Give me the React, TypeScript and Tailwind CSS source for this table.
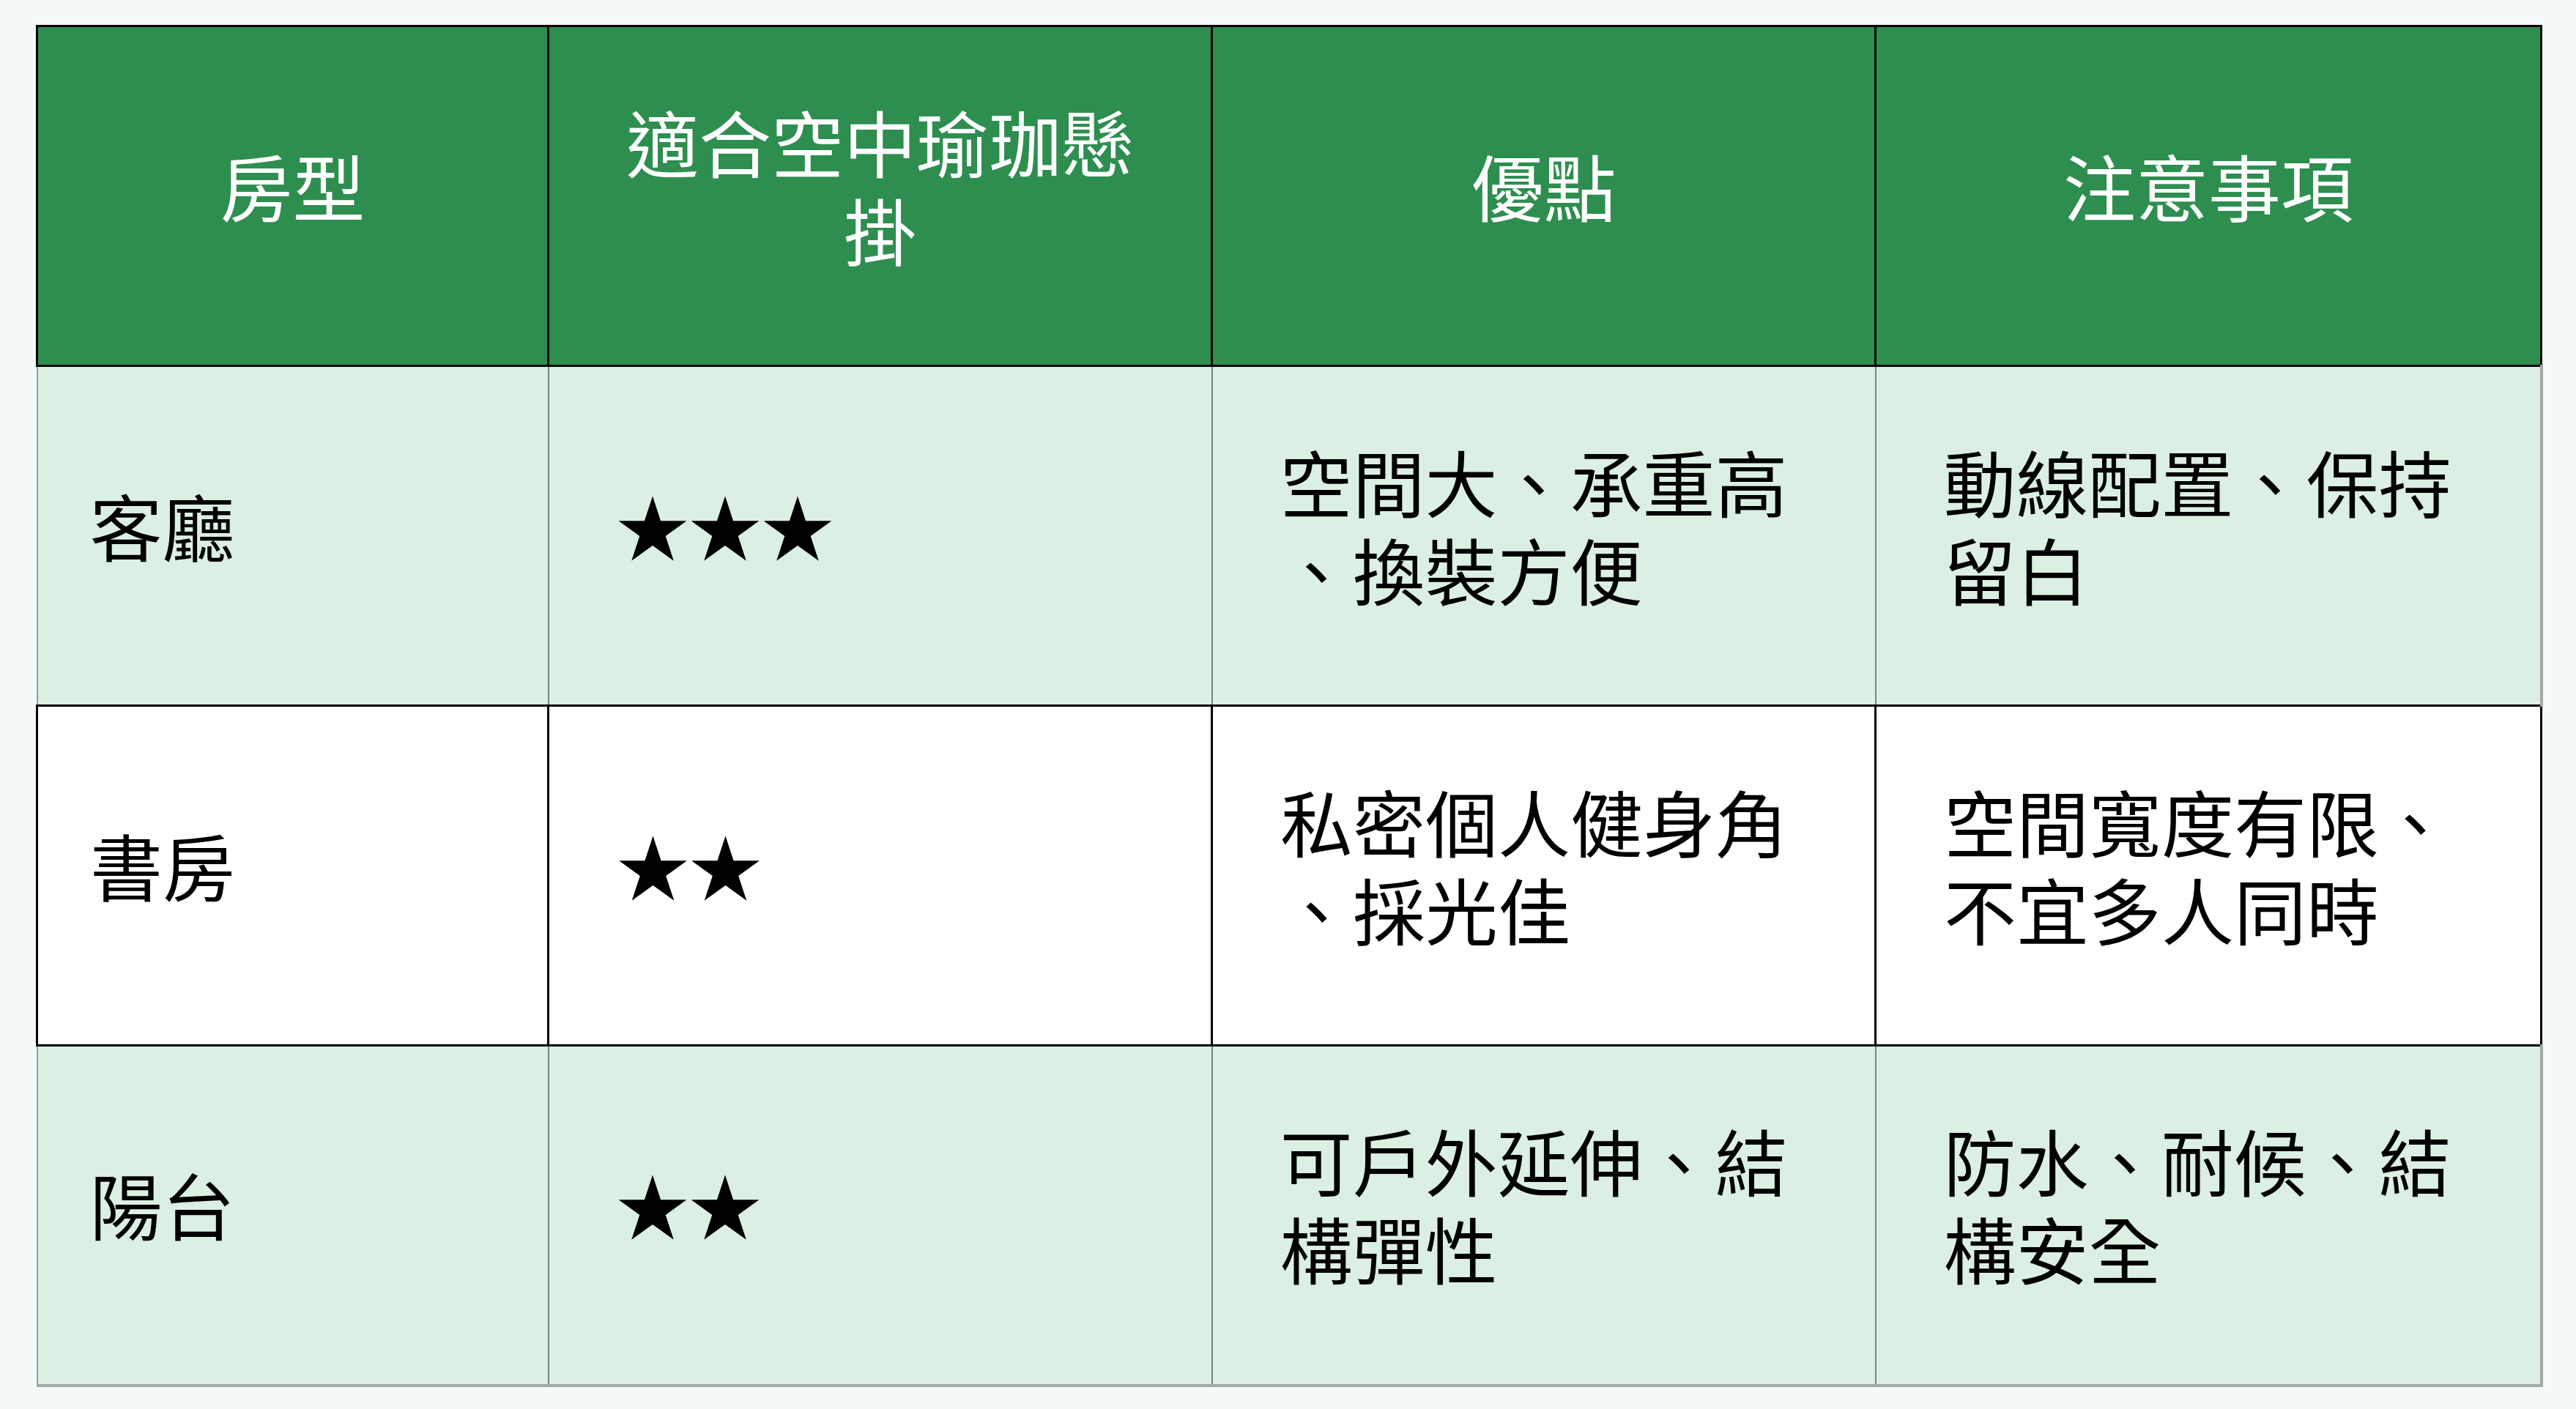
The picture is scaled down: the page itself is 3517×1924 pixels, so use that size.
const rows = [
  {
    room: '客廳',
    stars: '★★★',
    pros: ['空間大、承重高', '、換裝方便'],
    notes: ['動線配置、保持', '留白'],
    tone: 'green',
  },
  {
    room: '書房',
    stars: '★★',
    pros: ['私密個人健身角', '、採光佳'],
    notes: ['空間寬度有限、', '不宜多人同時'],
    tone: 'white',
  },
  {
    room: '陽台',
    stars: '★★',
    pros: ['可戶外延伸、結', '構彈性'],
    notes: ['防水、耐候、結', '構安全'],
    tone: 'green',
  },
];

function Lines({ lines }: { lines: string[] }) {
  return (
    <>
      {lines.map((l, i) => (
        <span key={i} className="block whitespace-nowrap">
          {l}
        </span>
      ))}
    </>
  );
}

export default function App() {
  return (
    <div
      className="min-h-screen w-full bg-[#f5f9f8] pl-[49px] pt-[34px]"
      style={{ fontFamily: '"Noto Sans CJK TC", "Noto Sans", sans-serif' }}
    >
      <table className="table-fixed border-collapse text-[99px] leading-[120px]">
        <colgroup>
          <col className="w-[698px]" />
          <col className="w-[906px]" />
          <col className="w-[906px]" />
          <col className="w-[909px]" />
        </colgroup>
        <thead>
          <tr className="h-[464px] bg-[#2e8e50] text-white">
            <th className="border-[3px] border-black pb-[32px] text-center align-middle font-normal">房型</th>
            <th className="border-[3px] border-black pb-[32px] text-center align-middle font-normal">
              <Lines lines={['適合空中瑜珈懸', '掛']} />
            </th>
            <th className="border-[3px] border-black pb-[32px] text-center align-middle font-normal">優點</th>
            <th className="border-[3px] border-black pb-[32px] text-center align-middle font-normal">注意事項</th>
          </tr>
        </thead>
        <tbody>
          {rows.map((r, i) => {
            const green = r.tone === 'green';
            const last = i === rows.length - 1;
            const cell = green
              ? 'border-2 border-[#7b837e] pb-[32px] align-middle text-black'
              : 'border-[3px] border-black pb-[32px] align-middle text-black';
            const bottom = last ? ' border-b-[4px] border-b-[#a2a8a4]' : '';
            return (
              <tr key={r.room} className={`h-[464px] ${green ? 'bg-[#dbefe2]' : 'bg-white'}`}>
                <td className={`${cell}${bottom} pl-[71px] ${green ? 'border-l-[#9aa09c]' : ''}`}>{r.room}</td>
                <td className={`${cell}${bottom} pl-[92px]`}>{r.stars}</td>
                <td className={`${cell}${bottom} pl-[92px]`}>
                  <Lines lines={r.pros} />
                </td>
                <td className={`${cell}${bottom} pl-[92px] ${green ? 'border-r-[4px] border-r-[#a2a8a4]' : ''}`}>
                  <Lines lines={r.notes} />
                </td>
              </tr>
            );
          })}
        </tbody>
      </table>
    </div>
  );
}
